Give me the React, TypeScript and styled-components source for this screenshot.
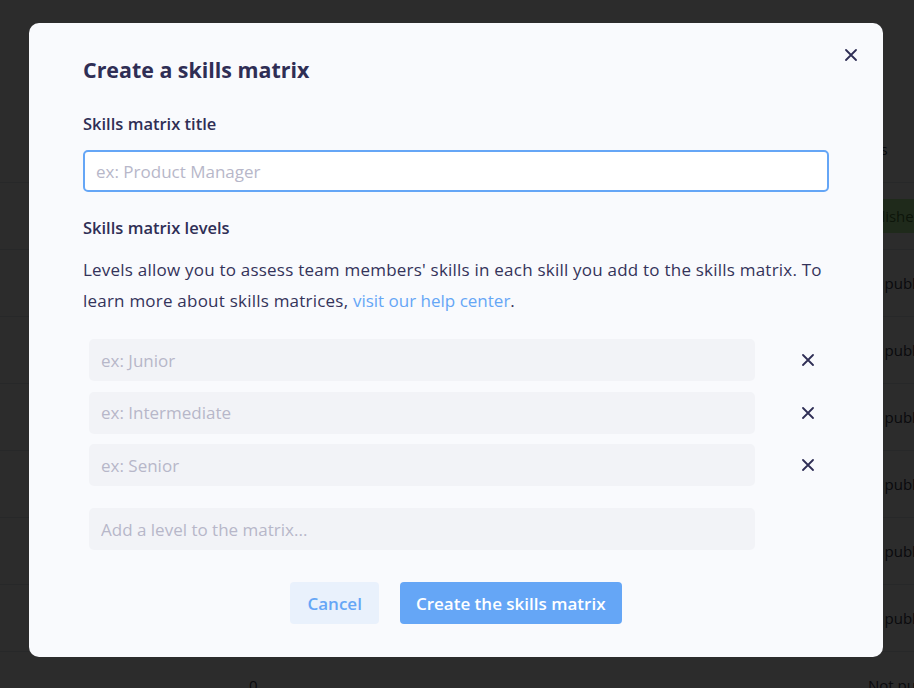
import React from 'react';
import styled, { createGlobalStyle } from 'styled-components';

const GlobalStyle = createGlobalStyle`
    html, body {
        margin: 0;
        padding: 0;
        background: #fdfffd;
        font-family: "Open Sans", "Liberation Sans", sans-serif;
    }
    * {
        box-sizing: border-box;
    }
`;

const Page = styled.div`
    width: 914px;
    height: 688px;
    overflow: hidden;
    padding-top: 116px;
`;

const TableRow = styled.div`
    display: grid;
    grid-template-columns: 249px 120px 471px 74px;
    align-items: center;
    height: 67px;
    border-bottom: 1px solid #e3e5ea;
    color: #3a3a50;
    font-size: 15px;
    white-space: nowrap;
`;

const Cell = styled.div<{ $shift?: number }>`
    margin-left: ${(p) => p.$shift || 0}px;
`;

const Badge = styled.span`
    display: inline-block;
    margin-left: 4px;
    padding: 7px 10px;
    background: #b4f39c;
    color: #4a7a3a;
`;

const Overlay = styled.div`
    position: fixed;
    inset: 0;
    background: rgba(0, 0, 0, 0.828);
    display: flex;
    align-items: flex-start;
    justify-content: flex-start;
    padding: 23px 0 0 29px;
`;

const Modal = styled.div`
    position: relative;
    width: 854px;
    background: #f9fafd;
    border-radius: 10px;
    padding: 33px 54px 33px 54px;
    color: #2f2e55;
`;

const CloseButton = styled.button`
    position: absolute;
    top: 22px;
    right: 22px;
    width: 20px;
    height: 20px;
    padding: 0;
    border: none;
    background: transparent;
    display: flex;
    align-items: center;
    justify-content: center;
    cursor: pointer;
    color: #2f2e55;
`;

const Title = styled.h1`
    margin: 0;
    font-size: 21.4px;
    line-height: 28px;
    font-weight: 700;
`;

const Label = styled.h2<{ $top: number }>`
    margin: ${(p) => p.$top}px 0 0 0;
    font-size: 16.5px;
    line-height: 24px;
    font-weight: 600;
`;

const TitleInput = styled.input`
    display: block;
    width: 746px;
    height: 42px;
    margin-top: 14px;
    padding: 0 11px;
    border: 2px solid #65a6f6;
    border-radius: 5px;
    background: #fff;
    font-family: inherit;
    font-size: 17px;
    color: #2f2e55;
    outline: none;

    &::placeholder {
        color: #b7b7c9;
    }
`;

const Text = styled.p`
    margin: 14px 0 0 0;
    font-size: 17px;
    line-height: 31px;
    letter-spacing: 0.22px;
    color: #34335a;
`;

const Link = styled.a`
    color: #65a6f6;
    text-decoration: none;
    letter-spacing: 0;
`;

const Levels = styled.div`
    display: flex;
    flex-direction: column;
    gap: 10.5px;
    margin-top: 23px;
    padding-left: 6px;
`;

const LevelRow = styled.div`
    display: flex;
    align-items: center;
`;

const LevelInput = styled.input`
    width: 666px;
    height: 42px;
    padding: 0 12px;
    border: none;
    border-radius: 5px;
    background: #f2f3f7;
    font-family: inherit;
    font-size: 17px;
    color: #2f2e55;
    outline: none;

    &::placeholder {
        color: #b7b7c9;
    }
`;

const RemoveButton = styled.button`
    margin-left: 43px;
    width: 20px;
    height: 20px;
    padding: 0;
    border: none;
    background: transparent;
    display: flex;
    align-items: center;
    justify-content: center;
    color: #2f2e55;
    cursor: pointer;
`;

const AddInput = styled(LevelInput)`
    margin-top: 22px;
    margin-left: 6px;
    display: block;
`;

const Footer = styled.div`
    display: flex;
    justify-content: center;
    gap: 21px;
    margin-top: 32px;
`;

const Button = styled.button<{ $primary?: boolean }>`
    height: 42px;
    padding: 0 ${(p) => (p.$primary ? 16 : 17)}px;
    border: none;
    border-radius: 4px;
    font-family: inherit;
    font-size: 17px;
    font-weight: 600;
    cursor: pointer;
    background: ${(p) => (p.$primary ? '#65a6f6' : '#e9f1fc')};
    color: ${(p) => (p.$primary ? '#ffffff' : '#65a6f6')};
`;

const Cross = ({ size }: { size: number }) => (
    <svg width={size} height={size} viewBox="0 0 12 12" fill="none">
        <path d="M1 1L11 11M11 1L1 11" stroke="currentColor" strokeWidth="1.8" strokeLinecap="round" />
    </svg>
);

const rows = [
    { count: '', status: 'Status', badge: false, shift: 4 },
    { count: '0', status: 'Published', badge: true, shift: 0 },
    { count: '0', status: 'Not published', badge: false, shift: 15 },
    { count: '0', status: 'Not published', badge: false, shift: 15 },
    { count: '0', status: 'Not published', badge: false, shift: 15 },
    { count: '0', status: 'Not published', badge: false, shift: 15 },
    { count: '0', status: 'Not published', badge: false, shift: 15 },
    { count: '0', status: 'Not published', badge: false, shift: 15 },
    { count: '0', status: 'Not published', badge: false, shift: 28 },
];

const App = () => {
    const levels = ['ex: Junior', 'ex: Intermediate', 'ex: Senior'];

    return (
        <>
            <GlobalStyle />
            <Page>
                {rows.map((row, index) => (
                    <TableRow key={index}>
                        <Cell></Cell>
                        <Cell>{row.count}</Cell>
                        <Cell></Cell>
                        <Cell $shift={row.shift}>
                            {row.badge ? <Badge>{row.status}</Badge> : row.status}
                        </Cell>
                    </TableRow>
                ))}
            </Page>

            <Overlay>
                <Modal>
                    <CloseButton aria-label="Close">
                        <Cross size={12} />
                    </CloseButton>

                    <Title>Create a skills matrix</Title>

                    <Label $top={28}>Skills matrix title</Label>
                    <TitleInput placeholder="ex: Product Manager" />

                    <Label $top={24}>Skills matrix levels</Label>
                    <Text>
                        Levels allow you to assess team members' skills in each skill you add to the skills matrix. To
                        learn more about skills matrices, <Link href="#">visit our help center</Link>.
                    </Text>

                    <Levels>
                        {levels.map((level) => (
                            <LevelRow key={level}>
                                <LevelInput placeholder={level} />
                                <RemoveButton aria-label="Remove level">
                                    <Cross size={12} />
                                </RemoveButton>
                            </LevelRow>
                        ))}
                    </Levels>

                    <AddInput placeholder="Add a level to the matrix..." />

                    <Footer>
                        <Button>Cancel</Button>
                        <Button $primary>Create the skills matrix</Button>
                    </Footer>
                </Modal>
            </Overlay>
        </>
    );
};

export default App;
